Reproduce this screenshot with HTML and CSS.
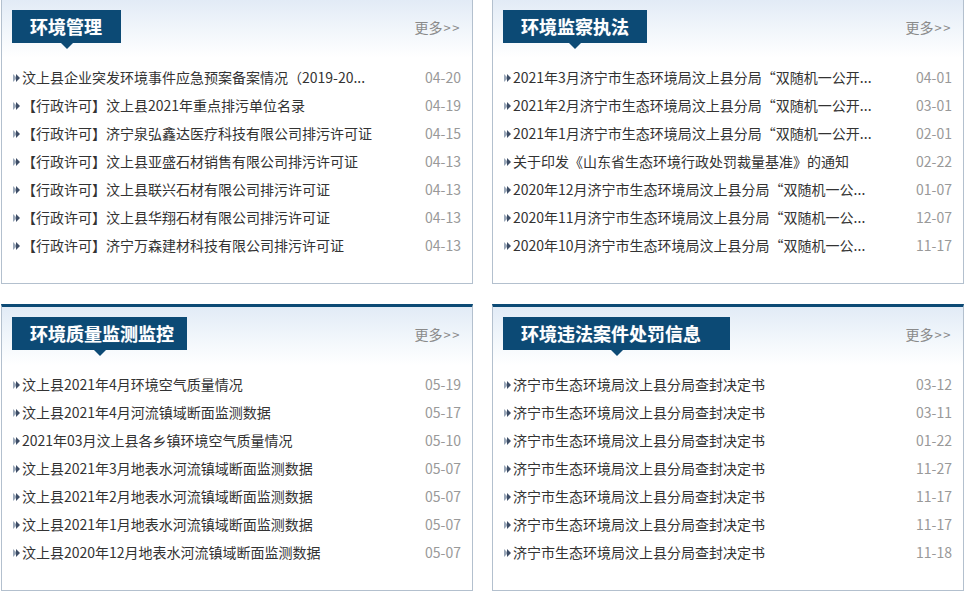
FILE: index.html
```html
<!DOCTYPE html>
<html lang="zh-CN">
<head>
<meta charset="utf-8">
<title>环境信息</title>
<link rel="stylesheet" href="styles.css">
</head>
<body>
<div class="grid">
  <section class="panel">
    <div class="head">
      <h2 class="title t1">环境管理</h2>
      <a class="more" href="#">更多<span class="arr">&gt;&gt;</span></a>
    </div>
    <ul class="list">
      <li><span class="txt">汶上县企业突发环境事件应急预案备案情况（2019-20...</span><span class="date">04-20</span></li>
      <li><span class="txt">【行政许可】汶上县2021年重点排污单位名录</span><span class="date">04-19</span></li>
      <li><span class="txt">【行政许可】济宁泉弘鑫达医疗科技有限公司排污许可证</span><span class="date">04-15</span></li>
      <li><span class="txt">【行政许可】汶上县亚盛石材销售有限公司排污许可证</span><span class="date">04-13</span></li>
      <li><span class="txt">【行政许可】汶上县联兴石材有限公司排污许可证</span><span class="date">04-13</span></li>
      <li><span class="txt">【行政许可】汶上县华翔石材有限公司排污许可证</span><span class="date">04-13</span></li>
      <li><span class="txt">【行政许可】济宁万森建材科技有限公司排污许可证</span><span class="date">04-13</span></li>
    </ul>
  </section>
  <section class="panel">
    <div class="head">
      <h2 class="title t2">环境监察执法</h2>
      <a class="more" href="#">更多<span class="arr">&gt;&gt;</span></a>
    </div>
    <ul class="list">
      <li><span class="txt">2021年3月济宁市生态环境局汶上县分局“双随机一公开...</span><span class="date">04-01</span></li>
      <li><span class="txt">2021年2月济宁市生态环境局汶上县分局“双随机一公开...</span><span class="date">03-01</span></li>
      <li><span class="txt">2021年1月济宁市生态环境局汶上县分局“双随机一公开...</span><span class="date">02-01</span></li>
      <li><span class="txt">关于印发《山东省生态环境行政处罚裁量基准》的通知</span><span class="date">02-22</span></li>
      <li><span class="txt">2020年12月济宁市生态环境局汶上县分局“双随机一公...</span><span class="date">01-07</span></li>
      <li><span class="txt">2020年11月济宁市生态环境局汶上县分局“双随机一公...</span><span class="date">12-07</span></li>
      <li><span class="txt">2020年10月济宁市生态环境局汶上县分局“双随机一公...</span><span class="date">11-17</span></li>
    </ul>
  </section>
  <section class="panel">
    <div class="head">
      <h2 class="title t3">环境质量监测监控</h2>
      <a class="more" href="#">更多<span class="arr">&gt;&gt;</span></a>
    </div>
    <ul class="list">
      <li><span class="txt">汶上县2021年4月环境空气质量情况</span><span class="date">05-19</span></li>
      <li><span class="txt">汶上县2021年4月河流镇域断面监测数据</span><span class="date">05-17</span></li>
      <li><span class="txt">2021年03月汶上县各乡镇环境空气质量情况</span><span class="date">05-10</span></li>
      <li><span class="txt">汶上县2021年3月地表水河流镇域断面监测数据</span><span class="date">05-07</span></li>
      <li><span class="txt">汶上县2021年2月地表水河流镇域断面监测数据</span><span class="date">05-07</span></li>
      <li><span class="txt">汶上县2021年1月地表水河流镇域断面监测数据</span><span class="date">05-07</span></li>
      <li><span class="txt">汶上县2020年12月地表水河流镇域断面监测数据</span><span class="date">05-07</span></li>
    </ul>
  </section>
  <section class="panel">
    <div class="head">
      <h2 class="title t4">环境违法案件处罚信息</h2>
      <a class="more" href="#">更多<span class="arr">&gt;&gt;</span></a>
    </div>
    <ul class="list">
      <li><span class="txt">济宁市生态环境局汶上县分局查封决定书</span><span class="date">03-12</span></li>
      <li><span class="txt">济宁市生态环境局汶上县分局查封决定书</span><span class="date">03-11</span></li>
      <li><span class="txt">济宁市生态环境局汶上县分局查封决定书</span><span class="date">01-22</span></li>
      <li><span class="txt">济宁市生态环境局汶上县分局查封决定书</span><span class="date">11-27</span></li>
      <li><span class="txt">济宁市生态环境局汶上县分局查封决定书</span><span class="date">11-17</span></li>
      <li><span class="txt">济宁市生态环境局汶上县分局查封决定书</span><span class="date">11-17</span></li>
      <li><span class="txt">济宁市生态环境局汶上县分局查封决定书</span><span class="date">11-18</span></li>
    </ul>
  </section>
</div>
</body>
</html>
```

FILE: styles.css
```css
html, body {
  margin: 0;
  padding: 0;
  background: #fff;
}
body {
  font-family: "Noto Sans CJK SC", "Noto Sans", sans-serif;
  font-size: 14px;
  color: #333;
  overflow: hidden;
}
.grid {
  display: grid;
  grid-template-columns: 472px 472px;
  grid-auto-rows: 287px;
  column-gap: 19px;
  row-gap: 20px;
  margin-top: -3px;
  padding-left: 1px;
}
.panel {
  box-sizing: border-box;
  border: 1px solid #b3c0ce;
  border-top: 3px solid #0c4a75;
  background: linear-gradient(to bottom, #e2ebf6 0px, #f1f6fb 30px, #ffffff 58px);
}
.head {
  display: flex;
  align-items: center;
  justify-content: space-between;
  margin: 10px 11px 0 10px;
  height: 33px;
}
.title {
  position: relative;
  margin: 0;
  height: 33px;
  line-height: 33px;
  box-sizing: border-box;
  padding-left: 18px;
  background: #0c4a75;
  color: #fff;
  font-size: 18px;
  font-weight: bold;
  white-space: nowrap;
  text-shadow: 0 0 1px rgba(255,255,255,0.4);
}
.title::after {
  content: "";
  position: absolute;
  left: 50%;
  top: 33px;
  margin-left: -6px;
  border-left: 6px solid transparent;
  border-right: 6px solid transparent;
  border-top: 6px solid #0c4a75;
}
.t1 { width: 109px; }
.t2 { width: 144px; }
.t3 { width: 175px; }
.t4 { width: 227px; }
.more {
  color: #8a8a8a;
  font-size: 14px;
  text-decoration: none;
  white-space: nowrap;
  flex-shrink: 0;
  margin-right: 1px;
}
.arr {
  font-size: 13px;
  letter-spacing: 1.5px;
  margin-left: 1px;
  margin-right: -1px;
}
.list {
  list-style: none;
  margin: 20px 11px 0 10px;
  padding: 0;
}
.list li {
  display: flex;
  align-items: center;
  height: 28px;
  padding-left: 10px;
  position: relative;
}
.list li::before {
  content: "";
  position: absolute;
  left: 1px;
  top: 11px;
  border-top: 4px solid transparent;
  border-bottom: 4px solid transparent;
  border-left: 4px solid #9aa7b8;
}
.list li::after {
  content: "";
  position: absolute;
  left: 4px;
  top: 11px;
  border-top: 4px solid transparent;
  border-bottom: 4px solid transparent;
  border-left: 4px solid #3d4d66;
}
.txt {
  flex: 1;
  white-space: nowrap;
  overflow: hidden;
  color: #333;
}
.date {
  color: #999;
  font-size: 14px;
  margin-left: 10px;
}
```
